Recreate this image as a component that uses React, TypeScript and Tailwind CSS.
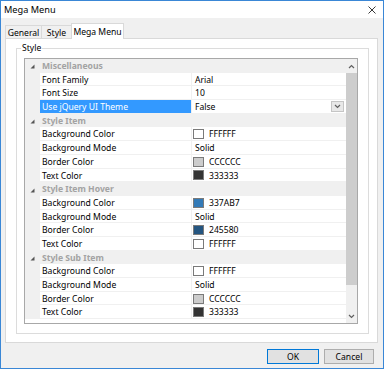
import React from "react";

type Item = { name: string; value: string; color?: string; selected?: boolean };

const sections: { title: string; items: Item[] }[] = [
  {
    title: "Miscellaneous",
    items: [
      { name: "Font Family", value: "Arial" },
      { name: "Font Size", value: "10" },
      { name: "Use jQuery UI Theme", value: "False", selected: true },
    ],
  },
  {
    title: "Style Item",
    items: [
      { name: "Background Color", value: "FFFFFF", color: "#ffffff" },
      { name: "Background Mode", value: "Solid" },
      { name: "Border Color", value: "CCCCCC", color: "#cccccc" },
      { name: "Text Color", value: "333333", color: "#333333" },
    ],
  },
  {
    title: "Style Item Hover",
    items: [
      { name: "Background Color", value: "337AB7", color: "#337ab7" },
      { name: "Background Mode", value: "Solid" },
      { name: "Border Color", value: "245580", color: "#245580" },
      { name: "Text Color", value: "FFFFFF", color: "#ffffff" },
    ],
  },
  {
    title: "Style Sub Item",
    items: [
      { name: "Background Color", value: "FFFFFF", color: "#ffffff" },
      { name: "Background Mode", value: "Solid" },
      { name: "Border Color", value: "CCCCCC", color: "#cccccc" },
      { name: "Text Color", value: "333333", color: "#333333" },
    ],
  },
];

const Chevron = ({ up }: { up?: boolean }) => (
  <svg width="7" height="5" viewBox="0 0 7 5" className="block">
    <polyline
      points={up ? "1,4 3.5,1.5 6,4" : "1,1 3.5,3.5 6,1"}
      fill="none"
      stroke="#606060"
      strokeWidth="1.2"
    />
  </svg>
);

const CategoryRow = ({ title }: { title: string }) => (
  <div className="flex h-[13.7px] bg-[#f0f0f0]">
    <div className="flex w-[15px] items-center justify-center pt-[2px]">
      <svg width="5" height="5" viewBox="0 0 5 5" className="block">
        <polygon points="4.5,0.5 4.5,4.5 0.5,4.5" fill="#555555" />
      </svg>
    </div>
    <span className="pl-[2px] pt-[3px] font-bold text-[#a3a3a3]">{title}</span>
  </div>
);

const PropRow = ({ item }: { item: Item }) => (
  <div className="flex h-[13.7px]">
    <div className="w-[15px] bg-[#f0f0f0]" />
    <div
      className={`w-[152px] border-b border-r border-[#f0f0f0] pl-[2px] pt-[3px] ${
        item.selected ? "bg-[#3399ff] text-white" : "bg-white text-black"
      }`}
    >
      {item.name}
    </div>
    <div className="flex flex-1 items-center border-b border-[#f0f0f0] bg-white pl-[1px] text-black">
      {item.color ? (
        <>
          <span
            className="mt-[1px] h-[10px] w-[11px] border border-[#7a7a7a]"
            style={{ backgroundColor: item.color }}
          />
          <span className="self-start pl-[5px] pt-[3px]">{item.value}</span>
        </>
      ) : (
        <span className="self-start pl-[2px] pt-[3px]">{item.value}</span>
      )}
      {item.selected && (
        <span className="ml-auto mr-[2px] flex h-[11px] w-[13px] items-center justify-center border border-[#c5c5c5] bg-[#e8e8e8]">
          <Chevron />
        </span>
      )}
    </div>
  </div>
);

export default function App() {
  return (
    <div
      className="h-[371px] w-[385px] bg-white text-[8.6px] leading-none"
      style={{ fontFamily: '"Noto Sans", "Open Sans", sans-serif' }}
    >
      <div className="flex h-[369px] w-[384px] flex-col border border-[#3a87d6] bg-[#f0f0f0]">
        {/* title bar */}
        <div className="flex h-[17px] items-center justify-between bg-white pl-[3px] pr-[7px]">
          <span className="pt-[1px] text-[9.2px] text-black">Mega Menu</span>
          <svg width="8" height="8" viewBox="0 0 8 8" className="block">
            <path d="M0.5 0.5 L7.5 7.5 M7.5 0.5 L0.5 7.5" stroke="#222" strokeWidth="0.9" />
          </svg>
        </div>

        {/* tabs */}
        <div className="flex h-[20px] items-end pl-[4px]">
          <div className="flex h-[13px] w-[37px] items-center justify-center border-l border-r border-t border-[#d9d9d9] pt-[2px] text-black">
            General
          </div>
          <div className="flex h-[13px] w-[30px] items-center justify-center border-r border-t border-[#d9d9d9] pt-[2px] text-black">
            Style
          </div>
          <div className="relative top-px z-10 -ml-px flex h-[16px] w-[53px] items-center justify-center border-l border-r border-t border-[#d9d9d9] bg-white pt-[1px] text-black">
            Mega Menu
          </div>
        </div>

        {/* tab page */}
        <div className="mx-[4px] mr-[5px] h-[305px] border border-[#d9d9d9] bg-white px-[10px] pr-[8px] pt-[9px]">
          <div className="relative h-[286px] border border-[#dcdcdc] pb-[9px] pl-[7px] pr-[10px] pt-[9px]">
            <span className="absolute left-[4px] top-[-5px] bg-white px-[1px] text-black">Style</span>
            <div className="flex h-[266px] border border-[#a8a8a8] bg-white">
              <div className="flex-1">
                {sections.map((s) => (
                  <React.Fragment key={s.title}>
                    <CategoryRow title={s.title} />
                    {s.items.map((it, i) => (
                      <PropRow key={s.title + i} item={it} />
                    ))}
                  </React.Fragment>
                ))}
              </div>
              {/* scrollbar */}
              <div className="flex w-[11px] flex-col bg-[#f0f0f0]">
                <div className="flex h-[14px] items-center justify-center">
                  <Chevron up />
                </div>
                <div className="h-[212px] bg-[#cdcdcd]" />
                <div className="flex-1" />
                <div className="flex h-[14px] items-center justify-center">
                  <Chevron />
                </div>
              </div>
            </div>
          </div>
        </div>

        {/* buttons */}
        <div className="flex justify-end gap-[5px] pr-[9px] pt-[6px]">
          <button className="flex h-[15px] w-[52px] items-center justify-center border border-[#0078d7] bg-[#e1e1e1] pt-[1px] text-black">
            OK
          </button>
          <button className="flex h-[15px] w-[50px] items-center justify-center border border-[#adadad] bg-[#e1e1e1] pt-[1px] text-black">
            Cancel
          </button>
        </div>
      </div>
    </div>
  );
}
